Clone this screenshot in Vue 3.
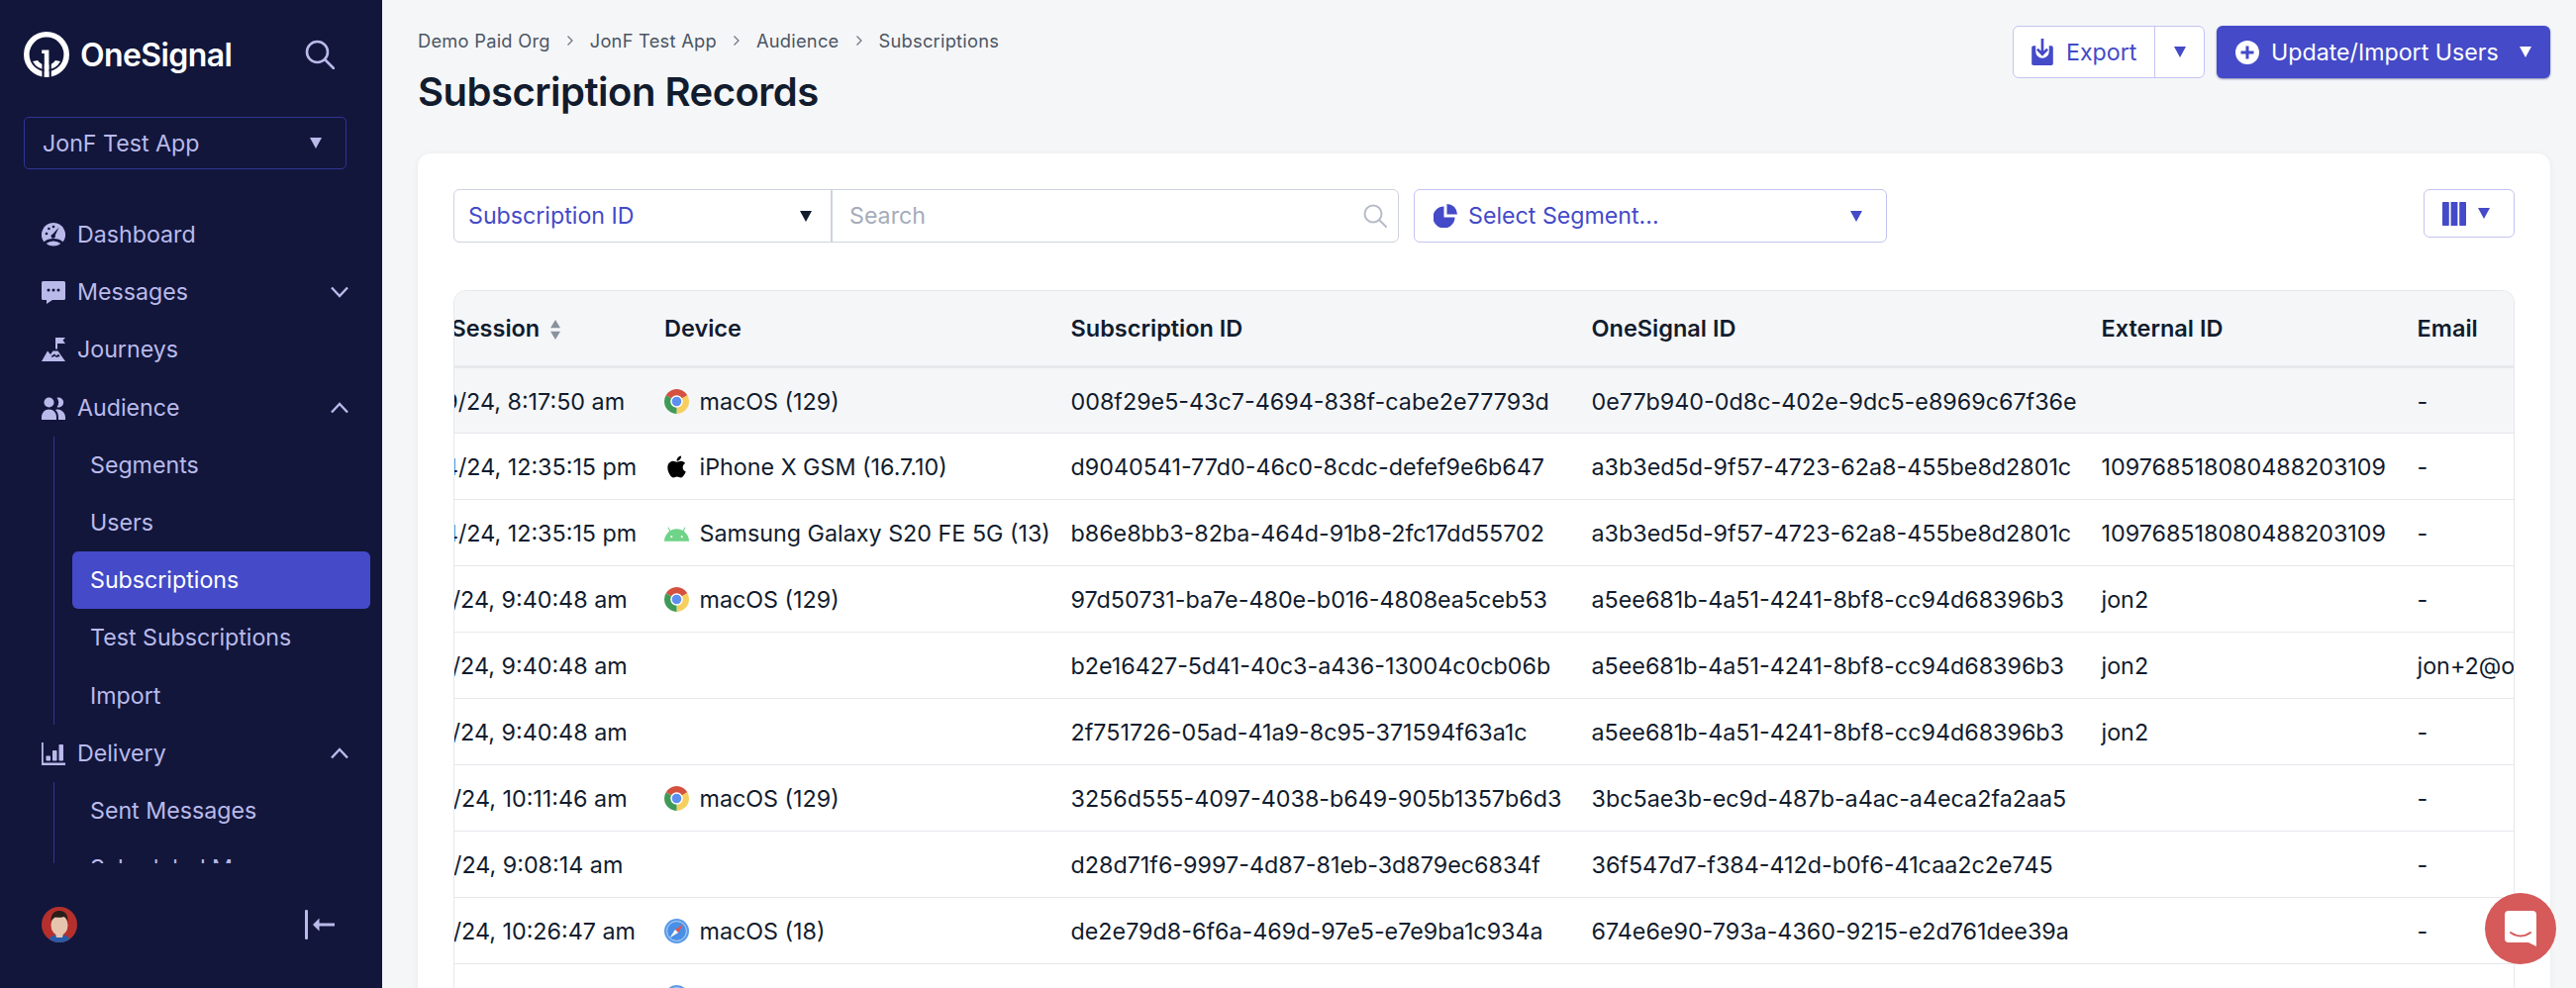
<template>
  <div class="app">
    <aside class="side">
      <div class="side__top">
        <div class="brand">
          <svg class="brand__mark" viewBox="0 0 46 46">
            <circle cx="23" cy="23" r="20.2" fill="none" stroke="#fff" stroke-width="5.6" />
            <path d="M9 30a16 16 0 0 0 28 0l-5-1a11 11 0 0 1-18 0z" fill="#fff" />
            <rect x="18.4" y="30" width="2.4" height="16" fill="#12163b" />
            <rect x="25.4" y="30" width="2.4" height="16" fill="#12163b" />
            <path d="M20.8 46V22h-2.6v-3.4h7.2V46z" fill="#fff" />
          </svg>
          <span class="brand__name">OneSignal</span>
          <svg class="brand__search" viewBox="0 0 30 30" fill="none" stroke="#b9baea" stroke-width="2.6" stroke-linecap="round">
            <circle cx="12.5" cy="12.5" r="10.5" />
            <path d="M20.5 20.5 29 29" />
          </svg>
        </div>
        <div class="app-select">
          <span>JonF Test App</span>
          <i class="caret caret--side"></i>
        </div>
      </div>

      <nav class="nav">
        <template v-for="item in nav" :key="item.label">
          <div class="nav__item">
            <svg class="nav__icon" viewBox="0 0 24 24" fill="#b9baea">
              <template v-if="item.icon === 'dash'">
                <path d="M12 0a12 12 0 0 0-9.6 19.2A15 15 0 0 1 12 16a15 15 0 0 1 9.6 3.2A12 12 0 0 0 12 0z" />
                <path d="M4.6 21a12 12 0 0 0 14.8 0A13 13 0 0 0 12 18.4 13 13 0 0 0 4.6 21z" />
                <path d="M17.6 4.4 13.8 12.6a2.2 2.2 0 1 1-2.6-1.2z" fill="#12163b" />
                <circle cx="5" cy="11" r="1.3" fill="#12163b" />
                <circle cx="7.4" cy="6" r="1.3" fill="#12163b" />
                <circle cx="12" cy="4" r="1.3" fill="#12163b" />
              </template>
              <template v-else-if="item.icon === 'msg'">
                <path d="M1.5 1h21A1.5 1.5 0 0 1 24 2.500V18.500a1.500 1.500 0 0 1-1.500 1.500H11L5 24v-4H1.500A1.500 1.500 0 0 1 0 18.500V2.500A1.500 1.500 0 0 1 1.500 1z" />
                <circle cx="7" cy="10" r="1.500" fill="#12163b" />
                <circle cx="12" cy="10" r="1.500" fill="#12163b" />
                <circle cx="17" cy="10" r="1.500" fill="#12163b" />
              </template>
              <template v-else-if="item.icon === 'journey'">
                <path d="M14 0h10l-2.500 2.700L24 6h-8v5.500h-2z" />
                <path d="M0 24 6 13.500l3 3.500 2.500-3.500h5L24 24z" />
                <path d="M9.500 19 13 16.500l2 2 2-2 1.500 2.500-3.500 1-2-1.500-2 1.500z" fill="#12163b" />
              </template>
              <template v-else-if="item.icon === 'people'">
                <circle cx="7.500" cy="6.500" r="5" />
                <path d="M15.500 1.800a5 5 0 1 1 0 9.400 8 8 0 0 0 0-9.400z" />
                <path d="M0 24v-2.500C0 17 3.200 13.500 7.500 13.500S15 17 15 21.500V24z" />
                <path d="M17 24v-2.500c0-3-1-5.700-3-7.500 5-1.800 10 2.500 10 7.500V24z" />
              </template>
              <template v-else>
                <path d="M0 1h1.800v20.500H24V24H0z" />
                <rect x="4.500" y="14.500" width="4.500" height="5" rx=".8" />
                <rect x="11" y="9" width="4.500" height="10.500" rx=".8" />
                <rect x="17.500" y="3" width="4.500" height="16.500" rx=".8" />
              </template>
            </svg>
            <span>{{ item.label }}</span>
            <svg v-if="item.open !== undefined" class="nav__chev" viewBox="0 0 18 12" fill="none" stroke="#b9baea" stroke-width="2.400">
              <path v-if="item.open" d="M1 10.500 9 2l8 8.500" />
              <path v-else d="M1 1.500 9 10l8-8.500" />
            </svg>
          </div>
          <div v-if="item.children" class="nav__sub">
            <div
              v-for="child in item.children"
              :key="child"
              class="nav__child"
              :class="{ 'nav__child--active': child === 'Subscriptions' }"
            >
              {{ child }}
            </div>
          </div>
        </template>
      </nav>

      <div class="side__foot">
        <svg class="avatar" viewBox="0 0 36 36">
          <defs>
            <clipPath id="avatar-clip"><circle cx="18" cy="18" r="18" /></clipPath>
          </defs>
          <g clip-path="url(#avatar-clip)">
            <rect width="36" height="36" fill="#b5302c" />
            <path d="M7 36c0-6 5-8 11-8s11 2 11 8z" fill="#2a5aa8" />
            <ellipse cx="18" cy="18.500" rx="8.500" ry="10.500" fill="#e7c4ae" />
            <path d="M9.500 15C9 6 14 4 18 4s9 2 8.500 11c-1-3-2.500-4.500-4-5-3 1-6 1-8.500.5-1.800 1-3.500 2-4.500 4.500z" fill="#2b1d1a" />
            <path d="M14 27h8l-1 4h-6z" fill="#e7c4ae" />
          </g>
        </svg>
        <svg class="collapse" viewBox="0 0 30 30" fill="#b9baea">
          <rect x="0" y="0" width="3" height="30" rx="1.200" />
          <path d="M30 13.500v3H14.500v5L8 15l6.500-6.500v5z" />
        </svg>
      </div>
    </aside>

    <main class="main">
      <header class="head">
        <div>
          <div class="crumbs">
            <template v-for="(c, i) in crumbs" :key="c">
              <span>{{ c }}</span>
              <svg v-if="i < crumbs.length - 1" class="crumbs__sep" viewBox="0 0 8 12" fill="none" stroke="#6b7280" stroke-width="1.200">
                <path d="M1.500 1.500 6 6l-4.500 4.500" />
              </svg>
            </template>
          </div>
          <h1 class="title">Subscription Records</h1>
        </div>
        <div class="actions">
          <div class="export">
            <button class="export__main">
              <svg class="export__icon" viewBox="0 0 24 30">
                <rect x="0" y="8" width="24" height="22" rx="2" fill="#444ac8" />
                <path d="M4.500 7v7.500a7.500 7.500 0 0 0 15 0V7z" fill="#fff" />
                <path d="M10.500 0h3v14l3.200-3.200 2 2L12 19.600l-6.700-6.800 2-2 3.200 3.200z" fill="#444ac8" />
              </svg>
              Export
            </button>
            <button class="export__more"><i class="caret caret--blue"></i></button>
          </div>
          <button class="primary">
            <svg class="primary__icon" viewBox="0 0 24 24">
              <circle cx="12" cy="12" r="12" fill="#fff" />
              <path d="M10.500 5.500h3v5h5v3h-5v5h-3v-5h-5v-3h5z" fill="#444ac8" />
            </svg>
            Update/Import Users
            <i class="caret caret--white"></i>
          </button>
        </div>
      </header>

      <section class="card">
        <div class="filters">
          <div class="search-group">
            <div class="search-group__type">
              <span>Subscription ID</span>
              <i class="caret caret--dark"></i>
            </div>
            <div class="search-group__input">
              <span>Search</span>
              <svg class="search-group__icon" viewBox="0 0 24 24" fill="none" stroke="#b6bcc8" stroke-width="2" stroke-linecap="round">
                <circle cx="10" cy="10" r="8.500" />
                <path d="m16.500 16.500 6.500 6.500" />
              </svg>
            </div>
          </div>
          <div class="segment">
            <svg class="segment__icon" viewBox="0 0 24 24" fill="#444ac8">
              <path d="M10.500 2.500V13.500H21.500A11 11 0 1 1 10.500 2.500z" />
              <path d="M13.500 0A10.500 10.500 0 0 1 24 10.500H13.500z" />
            </svg>
            <span>Select Segment...</span>
            <i class="caret caret--blue segment__caret"></i>
          </div>
          <button class="cols">
            <svg class="cols__icon" viewBox="0 0 24 24" fill="#444ac8">
              <rect x="0" y="0" width="6.800" height="24" rx=".8" />
              <rect x="8.600" y="0" width="6.800" height="24" />
              <rect x="17.200" y="0" width="6.800" height="24" rx=".8" />
            </svg>
            <i class="caret caret--blue"></i>
          </button>
        </div>

        <div class="table-wrap">
          <table class="table">
            <colgroup>
              <col class="c-session" />
              <col class="c-device" />
              <col class="c-sub" />
              <col class="c-os" />
              <col class="c-ext" />
              <col class="c-mail" />
            </colgroup>
            <thead>
              <tr>
                <th>
                  Last Session
                  <svg class="sort" viewBox="0 0 10 18" fill="#8a919e">
                    <path d="M5 0l4.500 7.500h-9zM5 18 .5 10.500h9z" />
                  </svg>
                </th>
                <th>Device</th>
                <th>Subscription ID</th>
                <th>OneSignal ID</th>
                <th>External ID</th>
                <th>Email</th>
              </tr>
            </thead>
            <tbody>
              <tr v-for="(row, i) in rows" :key="i" :class="{ 'is-hover': i === 0 }">
                <td>{{ row.session }}</td>
                <td>
                  <span class="device">
                    <svg v-if="row.browser === 'chrome'" class="device__icon" viewBox="0 0 24 24">
                      <path d="M12 12 1.610 6A12 12 0 0 1 22.390 6z" fill="#d4503f" />
                      <path d="M12 12 22.390 6A12 12 0 0 1 12 24z" fill="#f6cf5f" />
                      <path d="M12 12 12 24A12 12 0 0 1 1.610 6z" fill="#3f9a58" />
                      <circle cx="12" cy="12" r="6" fill="#fff" />
                      <circle cx="12" cy="12" r="4.600" fill="#5d8ff0" />
                    </svg>
                    <svg v-else-if="row.browser === 'apple'" class="device__icon" viewBox="0 0 384 512">
                      <path d="M318.7 268.700c-.2-36.700 16.400-64.400 50-84.800-18.800-26.900-47.200-41.700-84.700-44.600-35.500-2.800-74.300 20.700-88.500 20.700-15 0-49.400-19.700-76.400-19.700C63.300 141.200 4 184.800 4 273.500q0 39.300 14.400 81.200c12.800 36.700 59 126.700 107.200 125.200 25.200-.6 43-17.900 75.800-17.900 31.800 0 48.300 17.900 76.400 17.900 48.600-.7 90.400-82.500 102.600-119.300-65.200-30.700-61.700-90-61.700-91.900zm-56.600-164.200c27.300-32.400 24.800-61.900 24-72.500-24.100 1.400-52 16.400-67.900 34.900-17.500 19.800-27.800 44.300-25.600 71.900 26.100 2 49.900-11.400 69.500-34.300z" fill="#000" />
                    </svg>
                    <svg v-else-if="row.browser === 'android'" class="device__icon" viewBox="0 0 24 24">
                      <path d="M0 20a12 12 0 0 1 24 0z" fill="#6fd388" />
                      <path d="M6 10.500 3.800 6.500M18 10.500l2.200-4" stroke="#6fd388" stroke-width="1" />
                      <circle cx="7" cy="15.500" r="1" fill="#fff" />
                      <circle cx="17" cy="15.500" r="1" fill="#fff" />
                    </svg>
                    <svg v-else-if="row.browser === 'safari'" class="device__icon" viewBox="0 0 24 24">
                      <circle cx="12" cy="12" r="12" fill="#5b9be8" />
                      <circle cx="12" cy="12" r="9.500" fill="#4a8fe6" stroke="#cfe2fa" stroke-width=".8" />
                      <path d="M18.500 5.500 10.500 10.500l3 3z" fill="#e5534b" />
                      <path d="M5.500 18.500l8-5-3-3z" fill="#fff" />
                    </svg>
                    <span v-if="row.device">{{ row.device }}</span>
                  </span>
                </td>
                <td>{{ row.sub }}</td>
                <td>{{ row.os }}</td>
                <td>{{ row.ext }}</td>
                <td>{{ row.email }}</td>
              </tr>
            </tbody>
          </table>
        </div>
      </section>
    </main>

    <button class="chat">
      <svg viewBox="0 0 32 36" class="chat__icon">
        <path d="M4 0h24a4 4 0 0 1 4 4v32l-8-4H4a4 4 0 0 1-4-4V4a4 4 0 0 1 4-4z" fill="#fff" />
        <path d="M6 22c6 4.500 14 4.500 20 0" fill="none" stroke="#d65a5a" stroke-width="2" stroke-linecap="round" />
      </svg>
    </button>
  </div>
</template>

<script setup>
const crumbs = ['Demo Paid Org', 'JonF Test App', 'Audience', 'Subscriptions']

const nav = [
  { label: 'Dashboard', icon: 'dash' },
  { label: 'Messages', icon: 'msg', open: false },
  { label: 'Journeys', icon: 'journey' },
  {
    label: 'Audience',
    icon: 'people',
    open: true,
    children: ['Segments', 'Users', 'Subscriptions', 'Test Subscriptions', 'Import']
  },
  {
    label: 'Delivery',
    icon: 'bars',
    open: true,
    children: ['Sent Messages', 'Scheduled Messages']
  }
]

const rows = [
  { session: '10/29/24, 8:17:50 am', browser: 'chrome', device: 'macOS (129)', sub: '008f29e5-43c7-4694-838f-cabe2e77793d', os: '0e77b940-0d8c-402e-9dc5-e8969c67f36e', ext: '', email: '-' },
  { session: '10/24/24, 12:35:15 pm', browser: 'apple', device: 'iPhone X GSM (16.7.10)', sub: 'd9040541-77d0-46c0-8cdc-defef9e6b647', os: 'a3b3ed5d-9f57-4723-62a8-455be8d2801c', ext: '109768518080488203109', email: '-' },
  { session: '10/24/24, 12:35:15 pm', browser: 'android', device: 'Samsung Galaxy S20 FE 5G (13)', sub: 'b86e8bb3-82ba-464d-91b8-2fc17dd55702', os: 'a3b3ed5d-9f57-4723-62a8-455be8d2801c', ext: '109768518080488203109', email: '-' },
  { session: '10/17/24, 9:40:48 am', browser: 'chrome', device: 'macOS (129)', sub: '97d50731-ba7e-480e-b016-4808ea5ceb53', os: 'a5ee681b-4a51-4241-8bf8-cc94d68396b3', ext: 'jon2', email: '-' },
  { session: '10/17/24, 9:40:48 am', sub: 'b2e16427-5d41-40c3-a436-13004c0cb06b', os: 'a5ee681b-4a51-4241-8bf8-cc94d68396b3', ext: 'jon2', email: 'jon+2@onesignal.com' },
  { session: '10/17/24, 9:40:48 am', sub: '2f751726-05ad-41a9-8c95-371594f63a1c', os: 'a5ee681b-4a51-4241-8bf8-cc94d68396b3', ext: 'jon2', email: '-' },
  { session: '10/15/24, 10:11:46 am', browser: 'chrome', device: 'macOS (129)', sub: '3256d555-4097-4038-b649-905b1357b6d3', os: '3bc5ae3b-ec9d-487b-a4ac-a4eca2fa2aa5', ext: '', email: '-' },
  { session: '10/16/24, 9:08:14 am', sub: 'd28d71f6-9997-4d87-81eb-3d879ec6834f', os: '36f547d7-f384-412d-b0f6-41caa2c2e745', ext: '', email: '-' },
  { session: '10/15/24, 10:26:47 am', browser: 'safari', device: 'macOS (18)', sub: 'de2e79d8-6f6a-469d-97e5-e7e9ba1c934a', os: '674e6e90-793a-4360-9215-e2d761dee39a', ext: '', email: '-' },
  { session: '', browser: 'safari', device: '', sub: '', os: '', ext: '', email: '' }
]
</script>

<style>
html,
body {
  margin: 0;
  height: 100%;
  overflow: hidden;
}
</style>

<style scoped>
.app {
  position: relative;
  display: flex;
  width: 2602px;
  height: 998px;
  overflow: hidden;
  background: #f5f6f8;
  color: #111c2e;
  font-family: Inter, 'Liberation Sans', sans-serif;
  font-size: 23.2px;
}

.side {
  flex: 0 0 386px;
  display: flex;
  flex-direction: column;
  background: #12163b;
  color: #b9baea;
}

.side__top {
  padding: 32px 36px 0 24px;
}

.brand {
  display: flex;
  align-items: center;
  height: 46px;
}

.brand__mark {
  width: 46px;
  height: 46px;
}

.brand__name {
  margin-left: 11px;
  color: #fff;
  font-size: 32px;
  font-weight: 600;
  letter-spacing: -0.6px;
}

.brand__search {
  width: 30px;
  height: 30px;
  margin-left: auto;
  margin-right: 12px;
}

.app-select {
  display: flex;
  align-items: center;
  justify-content: space-between;
  height: 53px;
  box-sizing: border-box;
  margin-top: 40px;
  padding: 0 24px 0 18px;
  border: 1.500px solid #2f3494;
  border-radius: 5px;
}

.nav {
  flex: 0 0 664px;
  margin-top: 37px;
  overflow: hidden;
}

.nav__item {
  display: flex;
  align-items: center;
  height: 58.200px;
  padding: 0 34px 0 42px;
}

.nav__icon {
  flex: 0 0 24px;
  width: 24px;
  height: 24px;
  margin-right: 12px;
}

.nav__chev {
  width: 18px;
  height: 12px;
  margin-left: auto;
}

.nav__sub {
  margin: 0 12px 0 54px;
  padding-left: 18px;
  border-left: 1.500px solid #2f3494;
}

.nav__child {
  display: flex;
  align-items: center;
  height: 58.200px;
  padding-left: 18px;
  border-radius: 6px;
}

.nav__child--active {
  background: #444ac8;
  color: #fff;
}

.side__foot {
  display: flex;
  align-items: center;
  justify-content: space-between;
  margin-top: 44px;
  padding: 0 48px 0 42px;
}

.avatar {
  width: 36px;
  height: 36px;
}

.collapse {
  width: 30px;
  height: 30px;
}

.caret {
  display: inline-block;
  width: 0;
  height: 0;
  border-left: 6.500px solid transparent;
  border-right: 6.500px solid transparent;
  border-top: 11px solid #444ac8;
}

.caret--side {
  border-top-color: #b9baea;
}

.caret--dark {
  border-top-color: #111c2e;
}

.caret--white {
  border-top-color: #fff;
}

.main {
  flex: 1;
  min-width: 0;
  padding: 0 26px 0 36px;
}

.head {
  display: flex;
  justify-content: space-between;
  align-items: flex-start;
  height: 155px;
}

.crumbs {
  display: flex;
  align-items: center;
  gap: 16px;
  margin-top: 29px;
  height: 24px;
  color: #4b5563;
  font-size: 18.300px;
  letter-spacing: 0.25px;
}

.crumbs__sep {
  width: 8px;
  height: 12px;
}

.title {
  margin: 12px 0 0;
  color: #111c2e;
  font-size: 40px;
  font-weight: 600;
  line-height: 56px;
  letter-spacing: -0.5px;
}

.actions {
  display: flex;
  gap: 12px;
  margin-top: 26px;
}

.export {
  display: flex;
  width: 194px;
  height: 53px;
  box-sizing: border-box;
  border: 1.500px solid #c3c4f1;
  border-radius: 6px;
  background: #fff;
}

.export__main,
.export__more {
  display: flex;
  align-items: center;
  border: 0;
  background: none;
  color: #444ac8;
  font: inherit;
}

.export__main {
  flex: 0 0 143px;
  padding: 0 0 0 18px;
  gap: 13px;
  border-right: 1px solid #c3c4f1;
}

.export__more {
  flex: 1;
  justify-content: center;
  padding: 0;
}

.export__icon {
  width: 22px;
  height: 27px;
}

.primary {
  display: flex;
  align-items: center;
  width: 337px;
  height: 53px;
  box-sizing: border-box;
  padding: 0 19px;
  border: 0;
  border-radius: 6px;
  background: #444ac8;
  box-shadow: 0 1px 2px rgba(30, 35, 110, 0.5);
  color: #fff;
  font: inherit;
}

.primary__icon {
  width: 24px;
  height: 24px;
  margin-right: 12px;
}

.primary .caret {
  margin-left: auto;
}

.card {
  height: 900px;
  box-sizing: border-box;
  padding: 36px 36px 0;
  border-radius: 13px 13px 0 0;
  background: #fff;
  box-shadow: 0 1px 6px rgba(17, 28, 46, 0.06);
}

.filters {
  display: flex;
  align-items: flex-start;
  height: 54px;
}

.search-group {
  display: flex;
  width: 955px;
  height: 54px;
  box-sizing: border-box;
  border: 1.500px solid #cdd3df;
  border-radius: 6px;
}

.search-group__type {
  display: flex;
  align-items: center;
  justify-content: space-between;
  width: 382px;
  box-sizing: border-box;
  padding: 0 19px 0 14px;
  border-right: 2px solid #cdd3df;
  color: #444ac8;
}

.search-group__input {
  flex: 1;
  display: flex;
  align-items: center;
  justify-content: space-between;
  padding: 0 11px 0 17px;
  color: #a5acba;
}

.search-group__icon {
  width: 24px;
  height: 24px;
}

.segment {
  display: flex;
  align-items: center;
  width: 478px;
  height: 54px;
  box-sizing: border-box;
  margin-left: 15px;
  padding: 0 24px 0 19px;
  border: 1.500px solid #c3c4f1;
  border-radius: 6px;
  color: #444ac8;
}

.segment__icon {
  width: 24px;
  height: 24px;
  margin-right: 11px;
}

.segment__caret {
  margin-left: auto;
}

.cols {
  display: flex;
  align-items: center;
  gap: 12px;
  width: 92px;
  height: 49px;
  box-sizing: border-box;
  margin-left: auto;
  padding: 0 0 0 18px;
  border: 1.500px solid #c3c4f1;
  border-radius: 6px;
  background: #fff;
}

.cols__icon {
  width: 24px;
  height: 24px;
}

.table-wrap {
  margin-top: 48px;
  overflow: hidden;
  border: 1.500px solid #e6e8ec;
  border-bottom: 0;
  border-radius: 13px 13px 0 0;
}

.table {
  width: 2540px;
  margin-left: -70.500px;
  border-collapse: collapse;
  table-layout: fixed;
  font-size: 23.300px;
}

.c-session {
  width: 269.500px;
}

.c-device {
  width: 410.500px;
}

.c-sub {
  width: 526px;
}

.c-os {
  width: 515px;
}

.c-ext {
  width: 319px;
}

.c-mail {
  width: 500px;
}

th,
td {
  padding: 0 13px;
  white-space: nowrap;
  text-align: left;
  overflow: hidden;
}

td {
  padding-top: 2px;
}

thead tr {
  height: 76px;
  background: #f5f6f8;
  border-bottom: 3px solid #e6e8ec;
}

th {
  font-size: 23.500px;
  font-weight: 600;
}

tbody tr {
  height: 67px;
  border-bottom: 1.500px solid #e6e8ec;
}

tr.is-hover {
  background: #f5f6f8;
}

.sort {
  width: 12px;
  height: 20px;
  margin-left: 4px;
  vertical-align: -3px;
}

.device {
  display: flex;
  align-items: center;
  gap: 10.500px;
}

.device__icon {
  flex: 0 0 25px;
  width: 25px;
  height: 25px;
}

.chat {
  position: absolute;
  right: 20px;
  bottom: 24px;
  display: flex;
  align-items: center;
  justify-content: center;
  width: 72px;
  height: 72px;
  padding: 0;
  border: 0;
  border-radius: 50%;
  background: #d65a5a;
}

.chat__icon {
  width: 32px;
  height: 36px;
}
</style>
